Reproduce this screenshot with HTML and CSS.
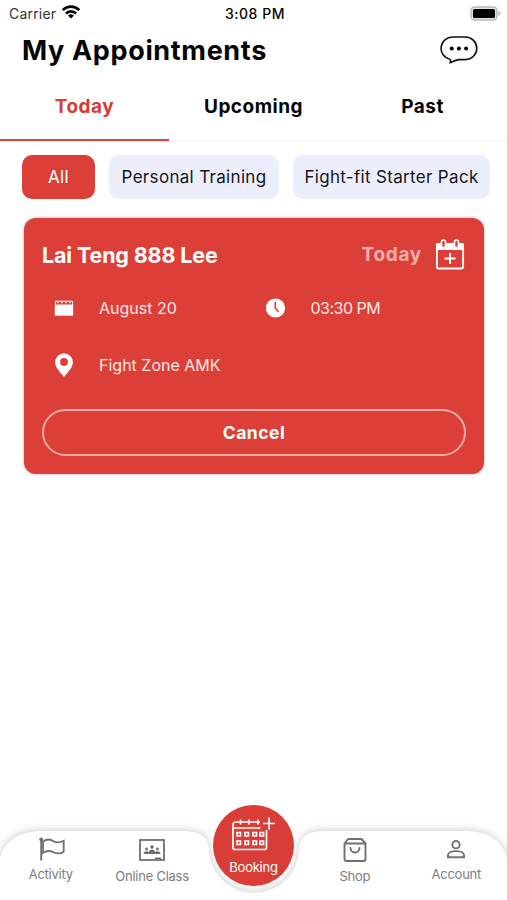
FILE: index.html
```html
<!DOCTYPE html>
<html lang="en">
<head>
    <meta charset="UTF-8">
    <meta name="viewport" content="width=device-width, initial-scale=1.0">
    <title>My Appointments</title>
    <link rel="stylesheet" href="styles.css">
</head>
<body>
    <div class="status-bar">
        <div class="carrier">
            <span>Carrier</span>
            <svg width="20" height="16" viewBox="0 0 20 16">
                <g fill="none" stroke="#000" stroke-width="2.7">
                    <path d="M1.7 6.1a11.8 11.8 0 0 1 16.6 0"/>
                    <path d="M4.9 9.5a7.2 7.2 0 0 1 10.2 0"/>
                </g>
                <path d="M10 14.5L7 11.6a4.3 4.3 0 0 1 6 0z"/>
            </svg>
        </div>
        <span class="clock">3:08 PM</span>
        <svg class="battery" width="31" height="15" viewBox="0 0 31 15">
            <rect x="1" y="1" width="26" height="13" rx="3.5" fill="#e4e4e4" stroke="#b9b9b9" stroke-width="1.4"/>
            <rect x="3" y="3" width="22" height="9" rx="1.5"/>
            <path d="M28.5 5v5q2-.8 2-2.5t-2-2.5z" fill="#b4b4b4"/>
        </svg>
    </div>

    <header>
        <h1>My Appointments</h1>
        <svg width="38" height="28" viewBox="0 0 38 28">
            <path d="M12.5 1h13a11.3 11.3 0 0 1 0 22.600h-7q-4 1-8.500 3.200 1.200-2-.2-3.500A11.300 11.300 0 0 1 12.500 1z" fill="#fff" stroke="#111" stroke-width="1.6" stroke-linejoin="round"/>
            <circle cx="11.700" cy="12.5" r="2"/>
            <circle cx="18.900" cy="12.5" r="2"/>
            <circle cx="26.100" cy="12.5" r="2"/>
        </svg>
    </header>

    <nav class="tabs">
        <a class="tab active">Today</a>
        <a class="tab">Upcoming</a>
        <a class="tab">Past</a>
    </nav>

    <div class="filters">
        <button class="chip chip-all selected">All</button>
        <button class="chip chip-training">Personal Training</button>
        <button class="chip chip-starter">Fight-fit Starter Pack</button>
    </div>

    <div class="card">
        <div class="card-head">
            <h2>Lai Teng 888 Lee</h2>
            <span class="day">Today</span>
            <svg width="30" height="31" viewBox="0 0 30 31">
                <path d="M2.5 4h25a1.5 1.5 0 0 1 1.5 1.5V11H1V5.5A1.5 1.5 0 0 1 2.5 4z" fill="#fff"/>
                <rect x="1.9" y="5" width="26.2" height="24.500" rx="1.5" fill="none" stroke="#fff" stroke-width="1.9"/>
                <rect x="6.5" y="1" width="4" height="7.5" rx="2" fill="#dc3f38" stroke="#fff" stroke-width="1.6"/>
                <rect x="19.5" y="1" width="4" height="7.5" rx="2" fill="#dc3f38" stroke="#fff" stroke-width="1.6"/>
                <path d="M15 14v11M9.5 19.5h11" stroke="#fff" stroke-width="1.9"/>
            </svg>
        </div>
        <div class="details">
            <div class="detail">
                <svg width="20" height="24" viewBox="0 0 20 24">
                    <path d="M.8 8.500h18.400v10a1.2 1.2 0 0 1-1.2 1.2H2a1.2 1.2 0 0 1-1.200-1.200z" fill="#fff"/>
                    <path d="M1.500 9V5.300h17V9" fill="none" stroke="#fff" stroke-width="1"/>
                    <path d="M3 6h14.500" stroke="#fff" stroke-width="2.400" stroke-dasharray="1.600 2.500" opacity=".8"/>
                </svg>
                <span>August 20</span>
            </div>
            <div class="detail time">
                <svg width="20" height="24" viewBox="0 0 20 24">
                    <circle cx="9.500" cy="12" r="9.600" fill="#fff"/>
                    <path d="M9.300 6v6l3.300 4" fill="none" stroke="#dc3f38" stroke-width="1.600"/>
                </svg>
                <span>03:30 PM</span>
            </div>
            <div class="detail">
                <svg width="20" height="24" viewBox="0 0 20 24">
                    <path fill="#fff" fill-rule="evenodd" d="M10 .3a8.900 8.900 0 0 0-8.900 8.900c0 6.300 8.900 14.500 8.900 14.500s8.900-8.200 8.900-14.500A8.900 8.900 0 0 0 10 .3zM10 5a3.900 3.900 0 1 1 0 7.800A3.900 3.900 0 0 1 10 5z"/>
                </svg>
                <span>Fight Zone AMK</span>
            </div>
        </div>
        <button class="cancel">Cancel</button>
    </div>

    <footer>
        <svg class="nav-shape" width="507" height="110" viewBox="0 0 507 110">
            <path d="M0 110V68Q8 41 42 41H182C201 41 207 47 209 58A45 45 0 0 0 299 58C301 47 307 41 326 41H465Q499 41 507 68V110z"/>
        </svg>
        <div class="nav-items">
            <a class="nav-item activity">
                <svg width="28" height="24" viewBox="0 0 28 24">
                    <g fill="none" stroke="#707070" stroke-width="1.800">
                        <path d="M4.200 2v21.500" stroke-width="1.900"/>
                        <path d="M6 4.500c4-3 8-2 10.500-.2 3.500 2 7 1 10.200-.6v11c-4 3-7 2-10.200.6-4-2-7-2-10.500.6z"/>
                    </g>
                    <circle cx="4.200" cy="2.300" r="1.900" fill="#707070"/>
                </svg>
                <span>Activity</span>
            </a>
            <a class="nav-item online">
                <svg width="28" height="24" viewBox="0 0 28 24">
                    <rect x="2" y="2" width="24" height="20" fill="none" stroke="#707070" stroke-width="1.800"/>
                    <g fill="#707070">
                        <circle cx="14" cy="9" r="1.800"/>
                        <circle cx="8.500" cy="11" r="1.400"/>
                        <circle cx="19.500" cy="11" r="1.400"/>
                        <path d="M5.500 16c0-4 5.500-3 5.500-1.500 0-4 6-4 6 0 0-1.500 5.500-2.500 5.500 1.500zM17 19.500h6V21h-6z"/>
                    </g>
                </svg>
                <span>Online Class</span>
            </a>
            <a class="nav-item booking">
                <svg width="44" height="36" viewBox="0 0 44 36">
                    <g fill="none" stroke="#fff" stroke-width="1.700">
                        <path d="M29 5H4.500A2.500 2.500 0 0 0 2 7.500V30.500A2 2 0 0 0 4 32.500H33.500A2 2 0 0 0 35.500 30.500V13M2 11h27.500"/>
                        <path d="M9.500 2.500v5M18 2.500v5M27 2.500v5M38 .5v12M32 6.500h12"/>
                        <path d="M6 15.500h3.500V19H6zM14 15.500h3.500V19H14zM22 15.500h3.500V19H22zM29 15.500h3.500V19H29zM6 24h3.500v3.500H6zM14 24h3.500v3.500H14zM22 24h3.500v3.500H22zM29 24h3.500v3.500H29z"/>
                    </g>
                </svg>
                <span>Booking</span>
            </a>
            <a class="nav-item shop">
                <svg width="26" height="26" viewBox="0 0 26 26">
                    <g fill="none" stroke="#707070" stroke-width="1.900" stroke-linejoin="round">
                        <path d="M2.500 6.500L6 2h13.500L23.500 6.500V22a2 2 0 0 1-2 2h-17a2 2 0 0 1-2-2zM2.500 6.500h21"/>
                        <path d="M8.500 11a4.500 4.500 0 0 0 9 0" stroke-linecap="round"/>
                    </g>
                </svg>
                <span>Shop</span>
            </a>
            <a class="nav-item account">
                <svg width="22" height="22" viewBox="0 0 22 22">
                    <g fill="none" stroke="#707070" stroke-width="1.900">
                        <circle cx="11" cy="6.700" r="3.700"/>
                        <path d="M3 19.200v-2c0-5.500 16-5.500 16 0v2z"/>
                    </g>
                </svg>
                <span>Account</span>
            </a>
        </div>
    </footer>
</body>
</html>
```

FILE: styles.css
```css
* {
    box-sizing: border-box;
}

body {
    margin: 0;
    height: 900px;
    overflow: hidden;
    display: flex;
    flex-direction: column;
    background-color: #fff;
    color: #050505;
    font-family: Inter, "Open Sans", sans-serif;
}

svg {
    display: block;
    flex-shrink: 0;
}

button {
    padding: 0;
    border: none;
    font-family: inherit;
}

h1, h2 {
    margin: 0;
}

.status-bar {
    display: grid;
    grid-template-columns: 1fr auto 1fr;
    align-items: center;
    height: 27px;
    padding: 0 6px 0 9px;
    font-size: 14px;
}

.carrier {
    display: flex;
    align-items: center;
    gap: 5px;
    color: #333;
    letter-spacing: 0.2px;
}

.carrier svg {
    margin-top: -3px;
}

.clock {
    font-weight: 500;
    letter-spacing: 0.5px;
}

.battery {
    justify-self: end;
}

header {
    display: flex;
    justify-content: space-between;
    align-items: center;
    height: 46px;
    padding: 0 29px 0 22px;
}

h1 {
    font-size: 27px;
    font-weight: 700;
    letter-spacing: 0.65px;
}

/* Tabs */
.tabs {
    display: flex;
    height: 69px;
    border-bottom: 2px solid #f7f7f7;
}

.tab {
    flex: 1;
    height: 68px;
    padding-bottom: 2px;
    display: flex;
    align-items: center;
    justify-content: center;
    font-size: 19px;
    font-weight: 700;
    letter-spacing: 0.5px;
}

.tab.active {
    color: #d83a35;
    border-bottom: 2px solid #d9433e;
    padding-bottom: 0;
}

/* Filter chips */
.filters {
    display: flex;
    gap: 14px;
    padding: 13px 17px 0 22px;
}

.chip {
    height: 44px;
    border-radius: 10px;
    background-color: #edeefb;
    color: #14151c;
    font-size: 17px;
    letter-spacing: 0.32px;
}

.chip-all {
    width: 73px;
}

.chip-training {
    width: 170px;
}

.chip-starter {
    width: 197px;
}

.chip.selected {
    background-color: #dc3f38;
    color: #fff;
}

/* Appointment card */
.card {
    margin: 19px 23px 0 24px;
    height: 256px;
    padding: 20px 19px 18px 18px;
    border-radius: 12px;
    background-color: #dc3f38;
    box-shadow: 0 0 3px rgba(70, 60, 90, 0.5);
    color: #fff;
}

.card-head {
    display: flex;
    align-items: center;
    height: 33px;
}

h2 {
    flex: 1;
    font-size: 21.5px;
    font-weight: 700;
    letter-spacing: -0.15px;
}

.day {
    margin-right: 13px;
    color: #fbb0ae;
    font-size: 19px;
    font-weight: 700;
    letter-spacing: 0.7px;
}

.details {
    display: grid;
    grid-template-columns: 1fr 1fr;
    grid-template-rows: 57px 57px;
    padding: 8px 0 16px;
}

.detail {
    display: flex;
    align-items: center;
    gap: 25px;
    padding-left: 12px;
    font-size: 16px;
    color: #ffe9e6;
}

.time {
    letter-spacing: -0.5px;
}

.cancel {
    width: 424px;
    height: 47px;
    padding-bottom: 1px;
    border: 2px solid #f4aaa6;
    border-radius: 24px;
    background-color: transparent;
    color: #fff;
    font-size: 17.5px;
    font-weight: 700;
    letter-spacing: 0.5px;
}

/* Bottom navigation */
footer {
    position: relative;
    height: 110px;
    margin-top: auto;
    flex-shrink: 0;
}

.nav-shape {
    position: absolute;
    left: 0;
    top: 0;
    fill: #fff;
    filter: drop-shadow(0 -1px 4px rgba(0, 0, 0, 0.2));
}

.nav-items {
    position: relative;
    display: grid;
    grid-template-columns: repeat(5, 1fr);
    height: 110px;
}

.nav-item {
    display: flex;
    flex-direction: column;
    align-items: center;
    color: #7d7d7d;
    font-size: 13px;
    line-height: 18px;
    letter-spacing: -0.25px;
    white-space: nowrap;
}

.activity {
    padding-top: 47px;
}

.activity span {
    margin-top: 4px;
}

.online {
    padding-top: 48px;
}

.online span {
    margin-top: 5px;
}

.booking {
    justify-self: center;
    width: 81px;
    height: 81px;
    margin-top: 15px;
    padding-top: 12px;
    border-radius: 50%;
    background-color: #d93d37;
    color: #fff;
}

.booking span {
    margin-top: 5px;
}

.shop {
    padding-top: 47px;
}

.shop span {
    margin-top: 4px;
}

.account {
    padding-top: 48px;
}

.account span {
    margin-top: 5px;
}
```
